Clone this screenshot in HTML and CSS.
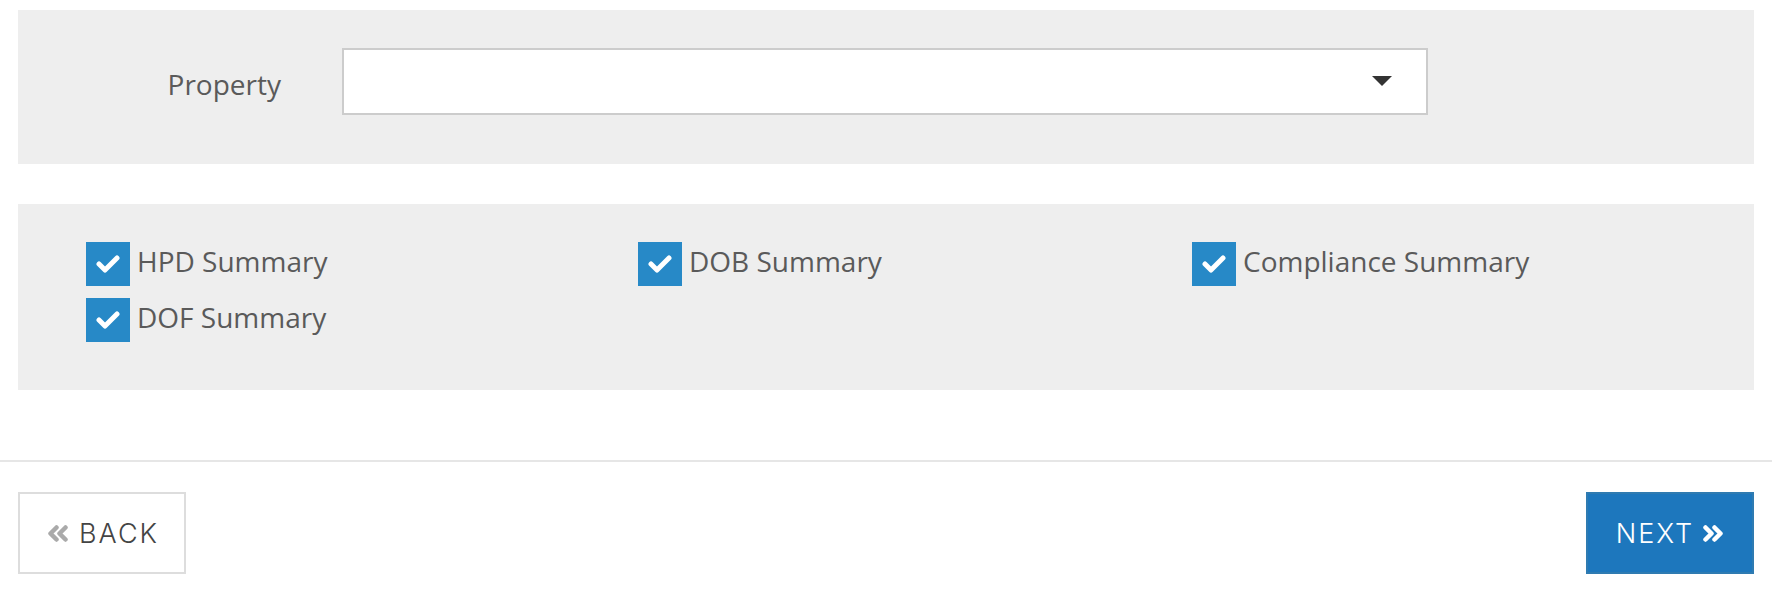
FILE: index.html
```html
<!DOCTYPE html>
<html lang="en">
<head>
<meta charset="utf-8">
<title>Report options</title>
<link rel="stylesheet" href="styles.css">
</head>
<body>
<div class="page">
  <section class="panel panel-property">
    <div class="prop-label-col"><label class="prop-label">Property</label></div>
    <div class="select"><span class="caret"></span></div>
  </section>

  <section class="panel panel-reports">
    <div class="report-grid">
      <div class="report-item">
        <span class="checkbox"><svg width="24" height="18" viewBox="0 0 24 18"><polyline points="3,9 9,15 21,3" fill="none" stroke="#fff" stroke-width="5" stroke-linejoin="round" stroke-linecap="round"/></svg></span>
        <span class="report-text">HPD Summary</span>
      </div>
      <div class="report-item">
        <span class="checkbox"><svg width="24" height="18" viewBox="0 0 24 18"><polyline points="3,9 9,15 21,3" fill="none" stroke="#fff" stroke-width="5" stroke-linejoin="round" stroke-linecap="round"/></svg></span>
        <span class="report-text">DOB Summary</span>
      </div>
      <div class="report-item">
        <span class="checkbox"><svg width="24" height="18" viewBox="0 0 24 18"><polyline points="3,9 9,15 21,3" fill="none" stroke="#fff" stroke-width="5" stroke-linejoin="round" stroke-linecap="round"/></svg></span>
        <span class="report-text">Compliance Summary</span>
      </div>
      <div class="report-item">
        <span class="checkbox"><svg width="24" height="18" viewBox="0 0 24 18"><polyline points="3,9 9,15 21,3" fill="none" stroke="#fff" stroke-width="5" stroke-linejoin="round" stroke-linecap="round"/></svg></span>
        <span class="report-text">DOF Summary</span>
      </div>
    </div>
  </section>

  <div class="divider"></div>

  <footer class="actions">
    <button class="btn btn-back">
      <svg class="chev" width="22" height="17" viewBox="0 0 22 17"><polyline points="9.5,2.5 3.5,8.5 9.5,14.5" fill="none" stroke="#aaa" stroke-width="4.5" stroke-linejoin="round" stroke-linecap="round"/><polyline points="18.5,2.5 12.5,8.5 18.5,14.5" fill="none" stroke="#aaa" stroke-width="4.5" stroke-linejoin="round" stroke-linecap="round"/></svg>
      <span>BACK</span>
    </button>
    <button class="btn btn-next">
      <span>NEXT</span>
      <svg class="chev" width="22" height="17" viewBox="0 0 22 17"><polyline points="3.5,2.5 9.5,8.5 3.5,14.5" fill="none" stroke="#fff" stroke-width="4.5" stroke-linejoin="round" stroke-linecap="round"/><polyline points="12.5,2.5 18.5,8.5 12.5,14.5" fill="none" stroke="#fff" stroke-width="4.5" stroke-linejoin="round" stroke-linecap="round"/></svg>
    </button>
  </footer>
</div>
</body>
</html>
```
FILE: styles.css
```css
html, body {
  margin: 0;
  padding: 0;
  background: #fff;
  font-family: "Open Sans", "Noto Sans", sans-serif;
}

.page {
  padding-top: 10px;
}

.panel {
  background: #eeeeee;
  margin: 0 18px;
}

.panel-property {
  display: flex;
  align-items: center;
  padding: 38px 0 49px 0;
}

.prop-label-col {
  width: 324px;
  padding-right: 61px;
  box-sizing: border-box;
  text-align: right;
}

.prop-label {
  display: block;
  font-size: 28px;
  color: #5a5a5a;
  line-height: 40px;
  margin-top: 4px;
}

.select {
  width: 1086px;
  height: 67px;
  box-sizing: border-box;
  border: 2px solid #cccccc;
  background: #fff;
  display: flex;
  align-items: center;
  justify-content: flex-end;
  padding-right: 34px;
}

.caret {
  width: 0;
  height: 0;
  border-left: 10px solid transparent;
  border-right: 10px solid transparent;
  border-top: 10px solid #333;
  margin-top: -1px;
}

.panel-reports {
  margin-top: 40px;
  padding: 38px 0 48px 68px;
}

.report-grid {
  display: grid;
  grid-template-columns: 552px 554px 553px;
  row-gap: 12px;
}

.report-item {
  display: flex;
  align-items: center;
  gap: 7px;
  height: 44px;
}

.checkbox {
  width: 44px;
  height: 44px;
  background: #2789c7;
  display: flex;
  align-items: center;
  justify-content: center;
  flex: none;
}

.report-text {
  font-size: 28px;
  color: #5a5a5a;
  line-height: 40px;
  margin-top: -7px;
}

.divider {
  margin-top: 70px;
  height: 2px;
  background: #e6e6e6;
}

.actions {
  display: flex;
  justify-content: space-between;
  padding: 30px 18px 18px;
}

.btn {
  height: 82px;
  width: 168px;
  box-sizing: border-box;
  display: flex;
  align-items: center;
  justify-content: center;
  gap: 10px;
  font-family: "Inter", "DejaVu Sans", sans-serif;
  font-size: 27px;
  font-weight: 300;
  letter-spacing: 2px;
  padding: 0;
  cursor: pointer;
}

.btn span {
  margin-right: -2px;
}

.btn-back {
  background: #fff;
  border: 2px solid #dddddd;
  color: #444;
}

.btn-next {
  background: #1d77bd;
  border: 2px solid #2f7bb1;
  color: #fff;
}

.chev {
  flex: none;
}
```
